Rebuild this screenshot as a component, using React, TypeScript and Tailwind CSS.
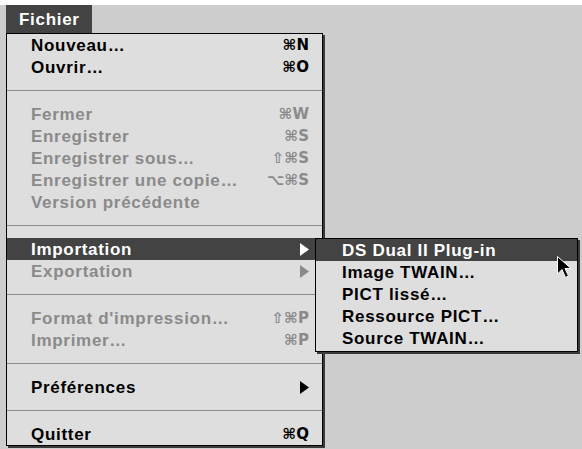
type Item = {
  label?: string;
  shortcut?: string;
  disabled?: boolean;
  submenu?: boolean;
  active?: boolean;
  sep?: boolean;
};

const items: Item[] = [
  { label: "Nouveau…", shortcut: "⌘N" },
  { label: "Ouvrir…", shortcut: "⌘O" },
  { sep: true },
  { label: "Fermer", shortcut: "⌘W", disabled: true },
  { label: "Enregistrer", shortcut: "⌘S", disabled: true },
  { label: "Enregistrer sous…", shortcut: "⇧⌘S", disabled: true },
  { label: "Enregistrer une copie…", shortcut: "⌥⌘S", disabled: true },
  { label: "Version précédente", disabled: true },
  { sep: true },
  { label: "Importation", submenu: true, active: true },
  { label: "Exportation", submenu: true, disabled: true },
  { sep: true },
  { label: "Format d'impression…", shortcut: "⇧⌘P", disabled: true },
  { label: "Imprimer…", shortcut: "⌘P", disabled: true },
  { sep: true },
  { label: "Préférences", submenu: true },
  { sep: true },
  { label: "Quitter", shortcut: "⌘Q" },
];

const subItems = [
  "DS Dual II Plug-in",
  "Image TWAIN…",
  "PICT lissé…",
  "Ressource PICT…",
  "Source TWAIN…",
];

function Arrow({ color }: { color: string }) {
  return (
    <svg width="9" height="13" viewBox="0 0 9 13">
      <path d="M0 0 L9 6.5 L0 13 Z" fill={color} />
    </svg>
  );
}

function Row({ item }: { item: Item }) {
  const text = item.active
    ? "text-white"
    : item.disabled
    ? "text-[#8a8a8a]"
    : "text-black";
  return (
    <div
      className={`flex h-[22px] items-center justify-between pl-[24px] pr-[13px] ${
        item.active ? "bg-[#434343]" : ""
      } ${text}`}
    >
      <span>{item.label}</span>
      {item.shortcut && (
        <span className="font-['DejaVu_Sans',sans-serif] text-[15px] tracking-normal">
          {item.shortcut}
        </span>
      )}
      {item.submenu && (
        <Arrow
          color={item.active ? "#ffffff" : item.disabled ? "#8a8a8a" : "#000000"}
        />
      )}
    </div>
  );
}

export default function App() {
  return (
    <div className="relative h-[449px] w-[582px] overflow-hidden bg-[#cdcdcd] font-['Liberation_Sans',Arial,sans-serif] text-[17px] font-bold leading-none tracking-[0.7px]">
      <div className="h-[5px] bg-white" />
      <div className="flex h-[28px]">
        <div className="ml-[6px] flex w-[86px] items-center bg-[#434343] pl-[13px] text-white">
          Fichier
        </div>
      </div>
      <div className="ml-[6px] w-[317px] border border-black bg-[#dedede] shadow-[2px_2px_0_#3a3a3a]">
        {items.map((item, i) =>
          item.sep ? (
            <div key={i} className="flex h-[25px] flex-col justify-start pt-[12px]">
              <div className="h-px bg-[#8c8c8c]" />
            </div>
          ) : (
            <Row key={i} item={item} />
          )
        )}
      </div>

      <div className="absolute left-[315px] top-[238px] w-[263px] border border-black bg-[#dedede] pb-[2px] shadow-[2px_2px_0_#3a3a3a]">
        {subItems.map((s, i) => (
          <div
            key={s}
            className={`flex h-[22px] items-center pl-[26px] ${
              i === 0 ? "bg-[#434343] text-white" : "text-black"
            }`}
          >
            {s}
          </div>
        ))}
      </div>

      <svg
        className="absolute left-[556px] top-[255px]"
        width="17"
        height="25"
        viewBox="0 0 17 25"
      >
        <path
          d="M1.5 1.5 L1.5 19 L6 14.5 L9.5 22.5 L12.5 21 L9 13.5 L15 13.5 Z"
          fill="#000"
          stroke="#fff"
          strokeWidth="1"
        />
      </svg>
    </div>
  );
}
